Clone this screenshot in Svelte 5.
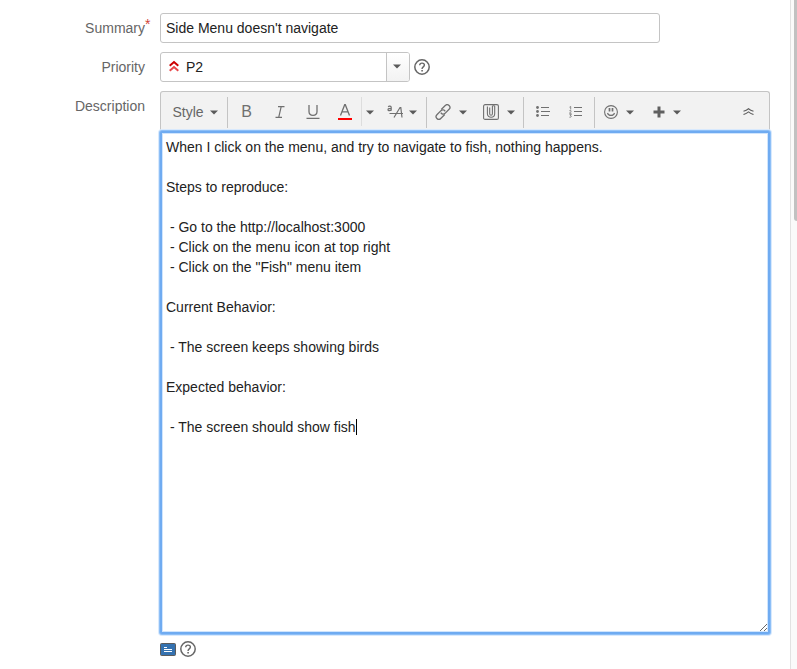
<script>
  const description = `When I click on the menu, and try to navigate to fish, nothing happens.

Steps to reproduce:

 - Go to the http://localhost:3000
 - Click on the menu icon at top right
 - Click on the "Fish" menu item

Current Behavior:

 - The screen keeps showing birds

Expected behavior:

 - The screen should show fish`;
  let summary = $state("Side Menu doesn't navigate");
  let body = $state(description);
</script>

{#snippet arrow()}
  <svg class="arrow" width="8" height="5" viewBox="0 0 8 5" aria-hidden="true"><path d="M0 .5h8L4 4.5z" fill="#5a5a5a" /></svg>
{/snippet}

{#snippet help()}
  <svg width="16" height="16" viewBox="0 0 16 16" fill="none" stroke="#666" aria-hidden="true">
    <circle cx="8" cy="8" r="7.2" stroke-width="1.5" />
    <path d="M5.7 6.2c.1-1.4 1-2.1 2.3-2.1 1.400 0 2.400.8 2.400 2 0 1.700-2.300 1.800-2.300 3.500v.3" stroke-width="1.4" />
    <path d="M8.100 11v1.600" stroke-width="1.600" />
  </svg>
{/snippet}

<div class="page">
  <form class="form" onsubmit={(e) => e.preventDefault()}>
    <div class="row">
      <label for="summary">Summary<sup>*</sup></label>
      <div class="field"><input id="summary" type="text" bind:value={summary} /></div>
    </div>

    <div class="row">
      <label for="priority">Priority</label>
      <div class="field inline">
        <div class="picker">
          <select id="priority"><option>P2</option></select>
          <svg class="level" width="10" height="12" viewBox="0 0 10 12" fill="none" stroke-width="2" aria-hidden="true">
            <path d="M.7 5.700L5 2l4.300 3.700" stroke="#c00" />
            <path d="M.7 10.700L5 7l4.300 3.700" stroke="#e8474a" />
          </svg>
          <span class="drop">{@render arrow()}</span>
        </div>
        <a class="icon" href="#priority-help" aria-label="Priority help">{@render help()}</a>
      </div>
    </div>

    <div class="row">
      <label for="description">Description</label>
      <div class="field">
        <div class="toolbar">
          <div class="group">
            <button type="button" class="style">Style {@render arrow()}</button>
          </div>
          <div class="group pad">
            <button type="button" class="glyph">B</button>
            <button type="button" aria-label="Italic">
              <svg width="10" height="12" viewBox="0 0 10 12" fill="none" stroke="#707070" stroke-width="1.200"><path d="M3 .600h6.500M.5 11.400H7M6.200.600L3.700 11.400" /></svg>
            </button>
            <button type="button" aria-label="Underline">
              <svg width="14" height="14" viewBox="0 0 14 14" fill="none" stroke="#707070" stroke-width="1.300"><path d="M3 0v6.500c0 2.600 1.500 3.800 4 3.800s4-1.200 4-3.800V0M.5 13.300h13" /></svg>
            </button>
            <button type="button" class="colour" aria-label="Text colour">
              <svg width="14" height="16" viewBox="0 0 14 16" fill="none" stroke="#707070" stroke-width="1.300"><path d="M2.500 11.500L6.700.700h.6l4.200 10.800M4 7.800h6" /><path d="M0 15h14" stroke="#f00" stroke-width="2" /></svg>
            </button>
            <button type="button" class="slim" aria-label="More colours">{@render arrow()}</button>
            <button type="button" class="more" aria-label="More formatting">
              <svg width="17" height="14" viewBox="0 0 17 14" fill="none" stroke="#707070" stroke-width="1.200"><path d="M1.200 1.800c.7-.9 3-.9 3 .7v3.200M4.200 3.500C2.600 3.400 1 3.600 1 4.700c0 1.400 2.500 1.200 3.200-.1M2.500 8.500H16M7 12.500L13 2.500h.8l1.200 10" /></svg>
              {@render arrow()}
            </button>
          </div>
          <div class="group">
            <button type="button" class="wide" aria-label="Link">
              <svg width="16" height="16" viewBox="0 0 16 16" fill="none" stroke="#707070" stroke-width="1.300"><g transform="rotate(-45 8 8)"><path d="M7.500 11H1.800a2.700 2.700 0 0 1 0-5.400h5.700a2.700 2.700 0 0 1 2.500 3.500" /><path d="M8.500 5h5.700a2.700 2.700 0 0 1 0 5.400H8.500A2.700 2.700 0 0 1 6 6.900" /></g></svg>
              {@render arrow()}
            </button>
            <button type="button" class="wide" aria-label="Attach">
              <svg width="16" height="16" viewBox="0 0 16 16" fill="none" stroke="#707070" stroke-width="1.100"><rect x=".6" y=".6" width="14.800" height="14.800" rx="1.500" /><path d="M6.700 3.500v6.300c0 2 2.700 2 2.700 0V2.300c0-.8 2.300-.8 2.300 0v7.500c0 4.600-7.300 4.600-7.300 0V2.500" /></svg>
              {@render arrow()}
            </button>
          </div>
          <div class="group list">
            <button type="button" aria-label="Bulleted list">
              <svg width="14" height="11" viewBox="0 0 14 11" fill="#707070"><circle cx="1.500" cy="1.500" r="1.400" /><circle cx="1.500" cy="5.500" r="1.400" /><circle cx="1.500" cy="9.500" r="1.400" /><path d="M5 1h8v1H5zM5 5h9v1H5zM5 9h8v1H5z" /></svg>
            </button>
            <button type="button" aria-label="Numbered list">
              <svg width="14" height="12" viewBox="0 0 14 12" fill="none" stroke="#707070"><path d="M5 1.500h8M5 5.500h8M5 9.500h8" /><path d="M.5 1.200L1.700.500v3M.4 4.700c1.600-.6 2.200.2 1.300 1.100L.5 7.300h2M.5 8.600h1.900L1.300 9.700c1.500 0 1.500 1.700-.9 1.500" stroke-width=".8" /></svg>
            </button>
          </div>
          <div class="group last">
            <button type="button" class="wide" aria-label="Emoji">
              <svg width="14" height="14" viewBox="0 0 14 14" fill="none" stroke="#707070" stroke-width="1.100"><circle cx="7" cy="7" r="6.400" /><path d="M5.500 3v3.500M8.500 3v3.500" stroke-width="1.700" /><path d="M3.500 8c.8 3.200 6.200 3.200 7 0" /></svg>
              {@render arrow()}
            </button>
            <button type="button" class="wide" aria-label="Insert">
              <svg width="12" height="12" viewBox="0 0 12 12" fill="none" stroke="#606060" stroke-width="3"><path d="M6 .5v11M.5 6h11" /></svg>
              {@render arrow()}
            </button>
          </div>
          <button type="button" class="collapse" aria-label="Collapse toolbar">
            <svg width="11" height="7" viewBox="0 0 11 7" fill="none" stroke="#606060" stroke-width="1.200"><path d="M.5 3.300Q3.500 2.300 5.500.700q2 1.600 5 2.600M.5 6.500q3-1 5-2.600 2 1.600 5 2.600" /></svg>
          </button>
        </div>
        <div class="editor">
          <textarea id="description" spellcheck="false" bind:value={body}></textarea>
          <span class="caret"></span>
        </div>
        <div class="foot">
          <button type="button" class="icon" aria-label="Preview">
            <svg width="16" height="13" viewBox="0 0 16 13"><rect x=".5" y=".5" width="15" height="12" rx="1" fill="#3572b0" stroke="#5c5c5c" /><path d="M4 4.500h3M4 6.500h8M4 8.500h8" stroke="#fff" /></svg>
          </button>
          <a class="icon" href="#formatting-help" aria-label="Formatting help">{@render help()}</a>
        </div>
      </div>
    </div>
  </form>
  <div class="track"><div class="thumb"></div></div>
</div>

<style>
  :global(body) { margin: 0; background: #fff; }
  .page {
    display: flex;
    min-height: 100vh;
    overflow: hidden;
    font: 14px/20px "Liberation Sans", Arial, sans-serif;
    color: #222;
  }
  .page * { box-sizing: border-box; }
  .form {
    flex: 1;
    min-width: 0;
    display: flex;
    flex-direction: column;
    gap: 9px;
    padding: 13px 20px 0 0;
  }
  .row { display: flex; gap: 15px; }
  label {
    flex: none;
    width: 145px;
    padding-top: 5px;
    text-align: right;
    color: #666;
  }
  sup { display: inline-block; width: 0; font-size: 14px; line-height: 0; vertical-align: 4px; color: #d04437; }
  .field { flex: 1; min-width: 0; }
  .inline { display: flex; align-items: center; gap: 4px; }
  input, select, textarea, button { margin: 0; font: inherit; color: inherit; }
  input, select {
    display: block;
    width: 100%;
    height: 30px;
    border: 1px solid #c4c4c4;
    border-radius: 3px;
    padding: 0 5px;
    background: #fff;
  }
  input { max-width: 500px; }
  .picker { position: relative; width: 250px; }
  select { appearance: none; padding: 0 30px 0 25px; }
  .level { position: absolute; left: 9px; top: 8px; }
  .drop {
    position: absolute;
    top: 1px;
    right: 1px;
    bottom: 1px;
    width: 23px;
    display: flex;
    align-items: center;
    justify-content: center;
    padding: 0 2px 2px 0;
    border-left: 1px solid #c4c4c4;
    border-radius: 0 2px 2px 0;
    background: linear-gradient(#fff, #f2f2f2);
    pointer-events: none;
  }
  .icon { display: flex; padding: 0; border: 0; background: none; }
  .toolbar {
    display: flex;
    height: 40px;
    border: 1px solid #c4c4c4;
    border-bottom: 0;
    border-radius: 3px 3px 0 0;
    background: #f2f2f2;
  }
  .group {
    display: flex;
    height: 31px;
    margin-top: 5px;
    border-right: 1px solid #c4c4c4;
  }
  .last { border-right: 0; }
  .pad { padding-left: 2px; }
  .list { padding: 0 2px; }
  .toolbar button {
    display: flex;
    align-items: center;
    justify-content: center;
    width: 33px;
    height: 29px;
    padding: 0;
    border: 0;
    background: none;
    color: #666;
  }
  .toolbar .style { width: 66px; gap: 6px; padding-left: 2px; }
  .toolbar .glyph { font-size: 16px; color: #707070; }
  .toolbar .colour { border-right: 1px solid #ddd; }
  .toolbar .slim { width: 15px; }
  .toolbar .more { width: 49px; gap: 5px; }
  .toolbar .wide { width: 48px; gap: 8px; }
  .toolbar .collapse { width: 42px; height: 39px; margin-left: auto; }
  .toolbar .arrow { margin-top: 1px; }
  .editor { position: relative; }
  textarea {
    display: block;
    width: 100%;
    height: 503px;
    padding: 4px;
    border: 2px solid #6fabf1;
    border-radius: 2px;
    outline: 0;
    box-shadow: 0 0 0 1px #8dbff7, 0 0 0 2px #d8e9fd, inset 0 0 0 1px #d0e5fd;
    background: #fff;
    resize: vertical;
    caret-color: transparent;
  }
  .caret { position: absolute; left: 196px; top: 288px; width: 1px; height: 16px; background: #000; }
  .foot { display: flex; align-items: center; gap: 4px; padding-top: 7px; }
  .track { flex: none; width: 7px; border-left: 1px solid #e2e2e2; background: #fafafa; }
  .thumb { height: 221px; margin-left: 3px; border-radius: 0 0 0 4px; background: #c1c1c1; }
</style>
